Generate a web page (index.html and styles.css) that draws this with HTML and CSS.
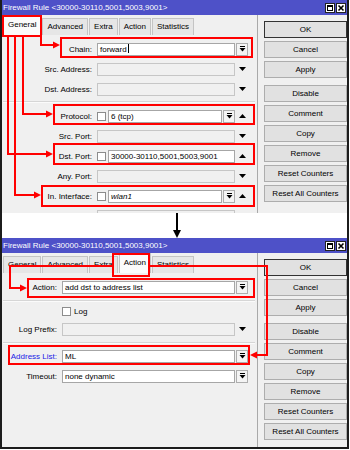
FILE: index.html
```html
<!DOCTYPE html>
<html>
<head>
<meta charset="utf-8">
<link rel="stylesheet" href="styles.css">
</head>
<body>
<div class="frame">
  <section class="win win1">
    <div class="titlebar">
      <span class="title">Firewall Rule &lt;30000-30110,5001,5003,9001&gt;</span>
      <div class="tb-btns">
        <span class="tbb"><svg width="8" height="8" viewBox="0 0 8 8"><rect x="1.5" y="1.5" width="5" height="5" fill="none" stroke="#000" stroke-width="1"/><rect x="1" y="1" width="6" height="2" fill="#000"/></svg></span>
        <span class="tbb"><svg width="8" height="8" viewBox="0 0 8 8"><path d="M1.5 1.5 L6.5 6.5 M6.5 1.5 L1.5 6.5" stroke="#000" stroke-width="1.6"/></svg></span>
      </div>
    </div>
    <div class="body">
      <div class="left">
        <div class="tabs">
          <span class="tab sel">General</span>
          <span class="tab">Advanced</span>
          <span class="tab">Extra</span>
          <span class="tab">Action</span>
          <span class="tab">Statistics</span>
        </div>
        <div class="form f1">
          <div class="row">
            <span class="lbl">Chain:</span>
            <div class="field">
              <span class="inp">forward<i class="caret"></i></span>
              <span class="dd"><svg width="7" height="6" viewBox="0 0 7 6"><rect x="1" y="0" width="5" height="1" fill="#000"/><path d="M0.5 2 L6.5 2 L3.5 5.5 Z" fill="#000"/></svg></span>
            </div>
          </div>
          <div class="row">
            <span class="lbl">Src. Address:</span>
            <div class="field">
              <div class="fc"><span class="inp dis"></span></div>
              <span class="arr"><svg width="7" height="4" viewBox="0 0 7 4"><path d="M0 0 L7 0 L3.5 4 Z" fill="#000"/></svg></span>
            </div>
          </div>
          <div class="row">
            <span class="lbl">Dst. Address:</span>
            <div class="field">
              <div class="fc"><span class="inp dis"></span></div>
              <span class="arr"><svg width="7" height="4" viewBox="0 0 7 4"><path d="M0 0 L7 0 L3.5 4 Z" fill="#000"/></svg></span>
            </div>
          </div>
          <div class="sep s1"></div>
          <div class="row">
            <span class="lbl">Protocol:</span>
            <div class="field">
              <div class="fc">
                <span class="cb"></span>
                <span class="inp">6 (tcp)</span>
                <span class="dd"><svg width="7" height="6" viewBox="0 0 7 6"><rect x="1" y="0" width="5" height="1" fill="#000"/><path d="M0.5 2 L6.5 2 L3.5 5.5 Z" fill="#000"/></svg></span>
              </div>
              <span class="arr"><svg width="7" height="4" viewBox="0 0 7 4"><path d="M0 4 L7 4 L3.5 0 Z" fill="#000"/></svg></span>
            </div>
          </div>
          <div class="row">
            <span class="lbl">Src. Port:</span>
            <div class="field">
              <div class="fc"><span class="inp dis"></span></div>
              <span class="arr"><svg width="7" height="4" viewBox="0 0 7 4"><path d="M0 0 L7 0 L3.5 4 Z" fill="#000"/></svg></span>
            </div>
          </div>
          <div class="row">
            <span class="lbl">Dst. Port:</span>
            <div class="field">
              <div class="fc">
                <span class="cb"></span>
                <span class="inp">30000-30110,5001,5003,9001</span>
              </div>
              <span class="arr"><svg width="7" height="4" viewBox="0 0 7 4"><path d="M0 4 L7 4 L3.5 0 Z" fill="#000"/></svg></span>
            </div>
          </div>
          <div class="row">
            <span class="lbl">Any. Port:</span>
            <div class="field">
              <div class="fc"><span class="inp dis"></span></div>
              <span class="arr"><svg width="7" height="4" viewBox="0 0 7 4"><path d="M0 0 L7 0 L3.5 4 Z" fill="#000"/></svg></span>
            </div>
          </div>
          <div class="row">
            <span class="lbl">In. Interface:</span>
            <div class="field">
              <div class="fc">
                <span class="cb"></span>
                <span class="inp it">wlan1</span>
                <span class="dd"><svg width="7" height="6" viewBox="0 0 7 6"><rect x="1" y="0" width="5" height="1" fill="#000"/><path d="M0.5 2 L6.5 2 L3.5 5.5 Z" fill="#000"/></svg></span>
              </div>
              <span class="arr"><svg width="7" height="4" viewBox="0 0 7 4"><path d="M0 4 L7 4 L3.5 0 Z" fill="#000"/></svg></span>
            </div>
          </div>
          <div class="row">
            <span class="lbl"></span>
            <div class="field">
              <div class="fc"><span class="inp dis"></span></div>
              <span class="arr"><svg width="7" height="4" viewBox="0 0 7 4"><path d="M0 0 L7 0 L3.5 4 Z" fill="#000"/></svg></span>
            </div>
          </div>
        </div>
      </div>
      <div class="right">
        <span class="btn ok">OK</span>
        <span class="btn">Cancel</span>
        <span class="btn">Apply</span>
        <span class="btn gap">Disable</span>
        <span class="btn">Comment</span>
        <span class="btn">Copy</span>
        <span class="btn">Remove</span>
        <span class="btn">Reset Counters</span>
        <span class="btn">Reset All Counters</span>
      </div>
    </div>
    <svg class="annot a1" width="350" height="213" viewBox="0 0 350 213">
      <g fill="none" stroke="#ff0000" stroke-width="2">
        <rect x="3" y="16" width="38" height="20"/>
        <rect x="61" y="38" width="191" height="19"/>
        <rect x="54" y="105" width="200" height="19"/>
        <rect x="54" y="144" width="200" height="20"/>
        <rect x="42" y="186" width="212" height="20"/>
        <polyline points="41,37 41,45 54,45"/>
        <polyline points="23,37 23,114 47,114"/>
        <polyline points="8,37 8,154 47,154"/>
        <polyline points="15,37 15,195 35,195"/>
      </g>
      <g fill="#ff0000">
        <path d="M53 41.5 L60 45 L53 48.5 Z"/>
        <path d="M46 110.5 L53 114 L46 117.5 Z"/>
        <path d="M46 150.5 L53 154 L46 157.5 Z"/>
        <path d="M34 191.5 L41 195 L34 198.5 Z"/>
      </g>
    </svg>
  </section>

  <div class="between">
    <svg class="down" width="10" height="25" viewBox="0 0 10 25"><rect x="4" y="0" width="2" height="18" fill="#000"/><path d="M1 17 L9 17 L5 25 Z" fill="#000"/></svg>
  </div>

  <section class="win win2">
    <div class="titlebar">
      <span class="title">Firewall Rule &lt;30000-30110,5001,5003,9001&gt;</span>
      <div class="tb-btns">
        <span class="tbb"><svg width="8" height="8" viewBox="0 0 8 8"><rect x="1.5" y="1.5" width="5" height="5" fill="none" stroke="#000" stroke-width="1"/><rect x="1" y="1" width="6" height="2" fill="#000"/></svg></span>
        <span class="tbb"><svg width="8" height="8" viewBox="0 0 8 8"><path d="M1.5 1.5 L6.5 6.5 M6.5 1.5 L1.5 6.5" stroke="#000" stroke-width="1.6"/></svg></span>
      </div>
    </div>
    <div class="body">
      <div class="left">
        <div class="tabs">
          <span class="tab">General</span>
          <span class="tab">Advanced</span>
          <span class="tab">Extra</span>
          <span class="tab sel">Action</span>
          <span class="tab">Statistics</span>
        </div>
        <div class="form f2">
          <div class="row">
            <span class="lbl">Action:</span>
            <div class="field">
              <span class="inp">add dst to address list</span>
              <span class="dd"><svg width="7" height="6" viewBox="0 0 7 6"><rect x="1" y="0" width="5" height="1" fill="#000"/><path d="M0.5 2 L6.5 2 L3.5 5.5 Z" fill="#000"/></svg></span>
            </div>
          </div>
          <div class="sep s2a"></div>
          <div class="row short">
            <span class="lbl"></span>
            <div class="field">
              <span class="cb"></span>
              <span class="cbl">Log</span>
            </div>
          </div>
          <div class="row">
            <span class="lbl">Log Prefix:</span>
            <div class="field">
              <div class="fc"><span class="inp dis"></span></div>
              <span class="arr"><svg width="7" height="4" viewBox="0 0 7 4"><path d="M0 0 L7 0 L3.5 4 Z" fill="#000"/></svg></span>
            </div>
          </div>
          <div class="sep s2b"></div>
          <div class="row">
            <span class="lbl blue">Address List:</span>
            <div class="field">
              <span class="inp">ML</span>
              <span class="dd"><svg width="7" height="6" viewBox="0 0 7 6"><rect x="1" y="0" width="5" height="1" fill="#000"/><path d="M0.5 2 L6.5 2 L3.5 5.5 Z" fill="#000"/></svg></span>
            </div>
          </div>
          <div class="row">
            <span class="lbl">Timeout:</span>
            <div class="field">
              <span class="inp">none dynamic</span>
              <span class="dd"><svg width="7" height="6" viewBox="0 0 7 6"><rect x="1" y="0" width="5" height="1" fill="#000"/><path d="M0.5 2 L6.5 2 L3.5 5.5 Z" fill="#000"/></svg></span>
            </div>
          </div>
        </div>
      </div>
      <div class="right">
        <span class="btn ok">OK</span>
        <span class="btn">Cancel</span>
        <span class="btn">Apply</span>
        <span class="btn gap">Disable</span>
        <span class="btn">Comment</span>
        <span class="btn">Copy</span>
        <span class="btn">Remove</span>
        <span class="btn">Reset Counters</span>
        <span class="btn">Reset All Counters</span>
      </div>
    </div>
    <svg class="annot a2" width="350" height="209" viewBox="0 0 350 209">
      <g fill="none" stroke="#ff0000" stroke-width="2">
        <rect x="113" y="16" width="36" height="22"/>
        <rect x="28" y="41" width="226" height="18"/>
        <rect x="9" y="108" width="240" height="18"/>
        <polyline points="112,28 10,28 10,50 21,50"/>
        <polyline points="150,28 267,28 267,117 256,117"/>
      </g>
      <g fill="#ff0000">
        <path d="M20 46.5 L27 50 L20 53.5 Z"/>
        <path d="M257 113.5 L250 117 L257 120.5 Z"/>
      </g>
    </svg>
  </section>
</div>
</body>
</html>
```

FILE: styles.css
```css
html, body {
  margin: 0;
  padding: 0;
  background: #ffffff;
}

body {
  font-family: "Liberation Sans", Arial, sans-serif;
  font-size: 8px;
  color: #000;
}

.frame {
  width: 345px;
  border-left: 2px solid #1c1c1c;
  border-right: 2px solid #1c1c1c;
}

.win {
  position: relative;
  background: #f0f0f0;
  overflow: hidden;
}

.win1 {
  height: 213px;
}

.win2 {
  height: 209px;
  border-bottom: 2px solid #1c1c1c;
}

.titlebar {
  height: 15px;
  background: #4e51c8;
  color: #fff;
  display: flex;
  align-items: center;
  justify-content: space-between;
  padding: 0 1px 0 1px;
}

.title {
  line-height: 15px;
  white-space: nowrap;
}

.tb-btns {
  display: flex;
  gap: 1px;
}

.tbb {
  width: 10px;
  height: 10px;
  box-sizing: border-box;
  border: 1px solid #222;
  background: #fff;
  display: flex;
  align-items: center;
  justify-content: center;
}

.tbb svg {
  display: block;
}

.body {
  display: flex;
  height: calc(100% - 15px);
}

.left {
  width: 255px;
  border-right: 1px solid #a9a9a9;
  display: flex;
  flex-direction: column;
}

.right {
  flex: 1;
  padding: 6px 0 0 6px;
  display: flex;
  flex-direction: column;
}

.tabs {
  height: 20px;
  display: flex;
  align-items: flex-end;
  padding-left: 1px;
}

.tab {
  height: 17px;
  box-sizing: border-box;
  line-height: 16px;
  padding: 0 4px;
  border: 1px solid #c4c4c4;
  border-bottom: none;
  background: #e6e6e6;
  margin-right: 1px;
  white-space: nowrap;
}

.tab.sel {
  height: 20px;
  line-height: 18px;
  background: #fbfbfb;
}

.form {
  padding-top: 4px;
}

.row {
  height: 20px;
  display: flex;
  align-items: center;
}

.row.short {
  height: 16px;
}

.lbl {
  text-align: right;
  white-space: nowrap;
  margin-right: 5px;
  flex: none;
}

.f1 .lbl {
  width: 90px;
}

.f2 .lbl {
  width: 55px;
}

.lbl.blue {
  color: #1a1ae6;
}

.field {
  display: flex;
  align-items: center;
}

.f1 .field {
  width: 151px;
}

.f2 .field {
  width: 186px;
}

.fc {
  flex: 1;
  display: flex;
  align-items: center;
}

.inp {
  flex: 1;
  height: 13px;
  box-sizing: border-box;
  border: 1px solid #a6a6a6;
  background: #fff;
  padding-left: 2px;
  line-height: 11px;
  white-space: nowrap;
  overflow: hidden;
  position: relative;
}

.inp.dis {
  background: #f0f0f0;
  border-color: #c6c6c6;
}

.inp.it {
  font-style: italic;
}

.caret {
  display: inline-block;
  width: 1px;
  height: 9px;
  background: #000;
  vertical-align: -1px;
  margin-left: 1px;
}

.dd {
  width: 12px;
  height: 13px;
  box-sizing: border-box;
  border: 1px solid #adadad;
  background: #f4f4f4;
  margin-left: 1px;
  display: flex;
  align-items: center;
  justify-content: center;
  flex: none;
}

.dd svg, .arr svg {
  display: block;
}

.arr {
  width: 13px;
  flex: none;
  display: flex;
  justify-content: flex-end;
  padding-right: 2px;
  box-sizing: border-box;
}

.cb {
  width: 9px;
  height: 9px;
  box-sizing: border-box;
  border: 1px solid #8c8c8c;
  background: #fff;
  margin-right: 2px;
  flex: none;
}

.cbl {
  margin-left: 1px;
}

.sep {
  height: 1px;
  background: #d6d6d6;
  border-bottom: 1px solid #fbfbfb;
  margin-left: 1px;
  margin-right: 2px;
}

.s1 {
  margin-top: 2px;
  margin-bottom: 3px;
}

.s2a {
  margin-top: 3px;
  margin-bottom: 1px;
}

.s2b {
  margin-top: 3px;
  margin-bottom: 2px;
}

.btn {
  height: 17px;
  box-sizing: border-box;
  border: 1px solid #adadad;
  background: #e1e1e1;
  text-align: center;
  line-height: 15px;
  margin-bottom: 3px;
  white-space: nowrap;
}

.btn.ok {
  border-color: #333;
}

.btn.gap {
  margin-top: 4px;
}

.annot {
  position: absolute;
  top: 0;
  left: -2px;
  pointer-events: none;
}

.between {
  height: 25px;
  background: #fff;
  position: relative;
}

.down {
  display: block;
  margin-left: 170px;
}
```
